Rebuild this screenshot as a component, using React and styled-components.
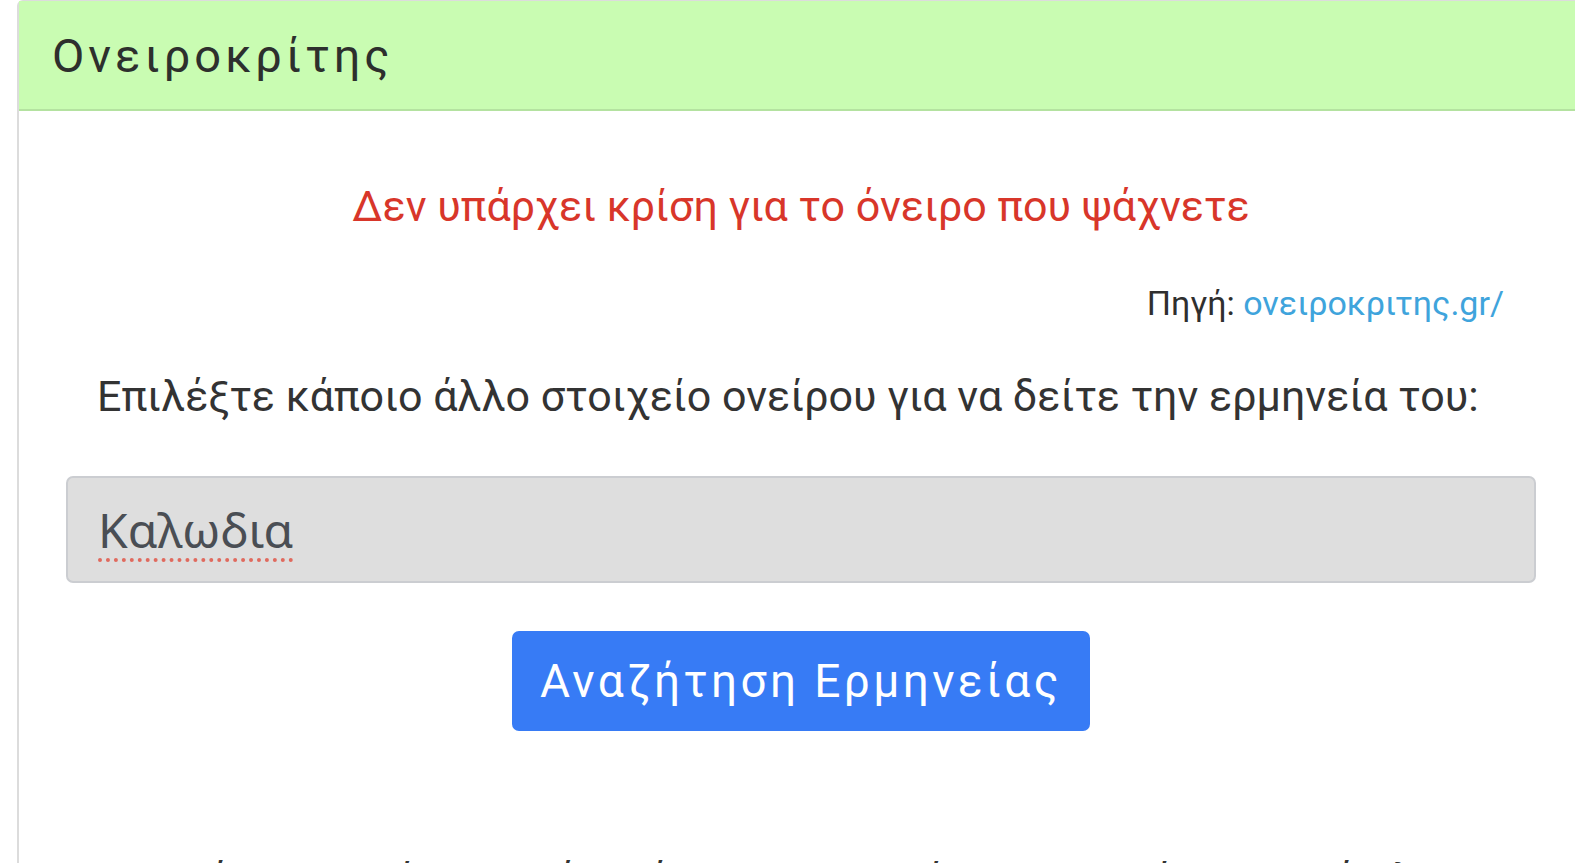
import React from "react";
import styled, { createGlobalStyle } from "styled-components";

const Global = createGlobalStyle`
  html, body { margin: 0; padding: 0; background: #fff; overflow: hidden; }
  body { font-family: Roboto, "Noto Sans", sans-serif; color: #333; }
`;

const Page = styled.div`
  width: 1575px;
  height: 863px;
  overflow: hidden;
  padding-left: 17px;
  box-sizing: border-box;
`;

const Card = styled.section`
  width: 1600px;
  border: 2px solid #dcdcdc;
  border-radius: 6px 0 0 0;
  background: #fff;
  box-sizing: border-box;
`;

const Header = styled.header`
  height: 108px;
  background: #c9fcb2;
  border-bottom: 2px solid #b4e2a0;
  display: flex;
  align-items: center;
  padding-left: 33px;
  margin-top: -1px;
`;

const Title = styled.h1`
  margin: 0;
  font-family: Roboto, sans-serif;
  font-weight: 400;
  font-size: 47px;
  letter-spacing: 4px;
  color: #2d2f2d;
`;

const Body = styled.div`
  width: 1517px;
  padding-left: 47px;
  box-sizing: border-box;
  display: flex;
  flex-direction: column;
`;

const Notice = styled.p`
  margin: 65px 0 0;
  text-align: center;
  font-size: 43px;
  line-height: 60px;
  color: #d8362a;
`;

const Source = styled.p`
  margin: 45px 0 0;
  padding-right: 32px;
  text-align: right;
  font-size: 34px;
  line-height: 44px;
  color: #2f2f2f;
`;

const SourceLink = styled.a`
  color: #3fa4dc;
  text-decoration: none;
`;

const Prompt = styled.p`
  margin: 43px 0 0;
  padding-left: 31px;
  font-size: 43px;
  line-height: 56px;
  color: #333;
  white-space: nowrap;
`;

const Field = styled.div`
  margin-top: 52px;
  height: 107px;
  background: #dedede;
  border: 2px solid #cbcdd1;
  border-radius: 7px;
  box-sizing: border-box;
  display: flex;
  align-items: center;
  padding-left: 30px;
`;

const FieldText = styled.span`
  font-family: "Noto Sans", "Open Sans", sans-serif;
  font-size: 48px;
  color: #4a4e54;
  text-decoration: underline dotted #e06a5e;
  text-decoration-thickness: 4px;
  text-underline-offset: 10px;
`;

const ButtonRow = styled.div`
  display: flex;
  justify-content: center;
  margin-top: 48px;
`;

const Button = styled.button`
  width: 578px;
  height: 100px;
  border: none;
  border-radius: 7px;
  background: #377bf5;
  color: #fff;
  font-family: Roboto, sans-serif;
  font-size: 46px;
  letter-spacing: 3.4px;
  padding: 0;
  cursor: pointer;
`;

const Next = styled.p`
  margin: 120px 0 0;
  padding-left: 31px;
  font-size: 43px;
  line-height: 56px;
  color: #333;
  white-space: nowrap;
`;

export default function App() {
  return (
    <>
      <Global />
      <Page>
        <Card>
          <Header>
            <Title>Ονειροκρίτης</Title>
          </Header>
          <Body>
            <Notice>Δεν υπάρχει κρίση για το όνειρο που ψάχνετε</Notice>
            <Source>
              Πηγή: <SourceLink href="#">ονειροκριτης.gr/</SourceLink>
            </Source>
            <Prompt>Επιλέξτε κάποιο άλλο στοιχείο ονείρου για να δείτε την ερμηνεία του:</Prompt>
            <Field>
              <FieldText>Καλωδια</FieldText>
            </Field>
            <ButtonRow>
              <Button>Αναζήτηση Ερμηνείας</Button>
            </ButtonRow>
            <Next>Λεξικό των ονείρων από τα όνειρα ερμηνείες των ονείρων κατά αλφαβητική σειρά</Next>
          </Body>
        </Card>
      </Page>
    </>
  );
}
